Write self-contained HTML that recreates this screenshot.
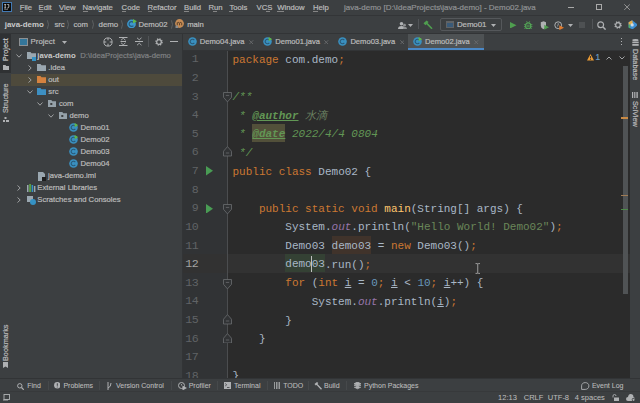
<!DOCTYPE html>
<html><head><meta charset="utf-8">
<style>
*{margin:0;padding:0;box-sizing:border-box}
html,body{width:640px;height:403px;overflow:hidden;background:#3c3f41;font-family:"Liberation Sans",sans-serif;color:#bbbbbb}
.a{position:absolute;white-space:pre;-webkit-text-stroke:0.2px currentColor}
.code,.ln{-webkit-text-stroke:0}
.code{position:absolute;left:232.5px;font-family:"Liberation Mono",monospace;font-size:11px;line-height:18.625px;height:18.625px;color:#a9b7c6;white-space:pre}
.ln{position:absolute;left:168.5px;width:30px;text-align:right;font-family:"Liberation Mono",monospace;font-size:11.6px;letter-spacing:-0.3px;line-height:18.625px;color:#606366}
.k{color:#cc7832}
.s{color:#6a8759}
.n{color:#6897bb}
.d{color:#629755;font-style:italic}
.tag{color:#629755;font-style:italic;font-weight:bold;text-decoration:underline}
.f{color:#9876aa;font-style:italic}
.m{color:#ffc66d}
.u{text-decoration:underline}
</style></head><body>
<div class="a" style="left:0px;top:0px;width:640px;height:15px;background:#3c3f41;"></div>
<div class="a" style="left:0px;top:15px;width:640px;height:1px;background:#333537;"></div>
<div class="a" style="left:2.2px;top:2.2px;width:9.8px;height:9.8px;background:#0a0a0a;border:1px solid #4379b3"></div>
<svg class="a" style="left:4px;top:3.8px" width="6" height="6.5" viewBox="0 0 6 6.5"><path d="M0.2 0.4H2.2M0.2 4H2.2M1.2 0.4V4" stroke="#c4c4c4" stroke-width="0.9" fill="none"/><path d="M3.2 0.4H4.8V2.9Q4.8 4 3.7 4H3.1" stroke="#c4c4c4" stroke-width="0.9" fill="none"/><rect x="0.2" y="5.3" width="3.8" height="0.9" fill="#8a8a8a"/></svg>
<div class="a" style="left:19.70px;top:2.73px;font-size:7.7px;line-height:10px;color:#bbbbbb">File</div>
<div class="a" style="left:38.50px;top:2.73px;font-size:7.7px;line-height:10px;color:#bbbbbb">Edit</div>
<div class="a" style="left:59.00px;top:2.73px;font-size:7.7px;line-height:10px;color:#bbbbbb">View</div>
<div class="a" style="left:82.50px;top:2.73px;font-size:7.7px;line-height:10px;color:#bbbbbb">Navigate</div>
<div class="a" style="left:121.60px;top:2.73px;font-size:7.7px;line-height:10px;color:#bbbbbb">Code</div>
<div class="a" style="left:147.50px;top:2.73px;font-size:7.7px;line-height:10px;color:#bbbbbb">Refactor</div>
<div class="a" style="left:184.00px;top:2.73px;font-size:7.7px;line-height:10px;color:#bbbbbb">Build</div>
<div class="a" style="left:208.50px;top:2.73px;font-size:7.7px;line-height:10px;color:#bbbbbb">Run</div>
<div class="a" style="left:229.40px;top:2.73px;font-size:7.7px;line-height:10px;color:#bbbbbb">Tools</div>
<div class="a" style="left:256.60px;top:2.73px;font-size:7.7px;line-height:10px;color:#bbbbbb">VCS</div>
<div class="a" style="left:277.20px;top:2.73px;font-size:7.7px;line-height:10px;color:#bbbbbb">Window</div>
<div class="a" style="left:312.90px;top:2.73px;font-size:7.7px;line-height:10px;color:#bbbbbb">Help</div>
<div class="a" style="left:19.7px;top:11.3px;width:3.5px;height:0.7px;background:#858585;"></div>
<div class="a" style="left:38.5px;top:11.3px;width:4px;height:0.7px;background:#858585;"></div>
<div class="a" style="left:59px;top:11.3px;width:4.5px;height:0.7px;background:#858585;"></div>
<div class="a" style="left:82.5px;top:11.3px;width:5px;height:0.7px;background:#858585;"></div>
<div class="a" style="left:121.6px;top:11.3px;width:4.5px;height:0.7px;background:#858585;"></div>
<div class="a" style="left:147.5px;top:11.3px;width:4.5px;height:0.7px;background:#858585;"></div>
<div class="a" style="left:184px;top:11.3px;width:4.5px;height:0.7px;background:#858585;"></div>
<div class="a" style="left:213px;top:11.3px;width:4px;height:0.7px;background:#858585;"></div>
<div class="a" style="left:229.4px;top:11.3px;width:4px;height:0.7px;background:#858585;"></div>
<div class="a" style="left:265.5px;top:11.3px;width:4.5px;height:0.7px;background:#858585;"></div>
<div class="a" style="left:277.2px;top:11.3px;width:6.5px;height:0.7px;background:#858585;"></div>
<div class="a" style="left:312.9px;top:11.3px;width:5px;height:0.7px;background:#858585;"></div>
<div class="a" style="left:344.00px;top:2.63px;font-size:7.98px;line-height:10px;color:#8f9193">java-demo [D:\IdeaProjects\java-demo] - Demo02.java</div>
<div class="a" style="left:567.6px;top:7px;width:6.4px;height:0.9px;background:#a9a9a9;"></div>
<div class="a" style="left:596px;top:4px;width:6.2px;height:6.4px;background:transparent;border:0.85px solid #a9a9a9"></div>
<svg class="a" style="left:624.3px;top:4px" width="6.2" height="6.2" viewBox="0 0 6.2 6.2"><path d="M0.3 0.3L5.9 5.9M5.9 0.3L0.3 5.9" stroke="#a9a9a9" stroke-width="0.8"/></svg>
<div class="a" style="left:0px;top:16px;width:640px;height:17px;background:#3c3f41;"></div>
<div class="a" style="left:0px;top:33px;width:640px;height:1px;background:#323436;"></div>
<div class="a" style="left:4.70px;top:20.26px;font-size:7.9px;line-height:10px;color:#c9c9c9;font-weight:bold;-webkit-text-stroke:0">java-demo</div>
<svg class="a" style="left:46.8px;top:20px" width="3" height="9" viewBox="0 0 3 9"><path d="M0.4 0.3Q2.6 4.5 0.4 8.7" stroke="#65686a" stroke-width="0.8" fill="none"/></svg>
<div class="a" style="left:54.40px;top:20.33px;font-size:7.7px;line-height:10px">src</div>
<svg class="a" style="left:66.5px;top:20px" width="3" height="9" viewBox="0 0 3 9"><path d="M0.4 0.3Q2.6 4.5 0.4 8.7" stroke="#65686a" stroke-width="0.8" fill="none"/></svg>
<div class="a" style="left:73.50px;top:20.33px;font-size:7.7px;line-height:10px">com</div>
<svg class="a" style="left:91.5px;top:20px" width="3" height="9" viewBox="0 0 3 9"><path d="M0.4 0.3Q2.6 4.5 0.4 8.7" stroke="#65686a" stroke-width="0.8" fill="none"/></svg>
<div class="a" style="left:98.50px;top:20.26px;font-size:7.9px;line-height:10px">demo</div>
<svg class="a" style="left:120.8px;top:20px" width="3" height="9" viewBox="0 0 3 9"><path d="M0.4 0.3Q2.6 4.5 0.4 8.7" stroke="#65686a" stroke-width="0.8" fill="none"/></svg>
<svg class="a" style="left:126.6px;top:18.6px" width="10" height="9.5" viewBox="0 0 10 9.5"><circle cx="4.5" cy="5" r="4.4" fill="#3d97cc"/><path d="M6.4 3.5A2.4 2.4 0 1 0 6.4 6.5" stroke="#245a7c" stroke-width="1.2" fill="none"/><path d="M6 0L10 2.2L6 4.4Z" fill="#5fb84a"/></svg>
<div class="a" style="left:138.50px;top:20.33px;font-size:7.7px;line-height:10px">Demo02</div>
<svg class="a" style="left:170.5px;top:20px" width="3" height="9" viewBox="0 0 3 9"><path d="M0.4 0.3Q2.6 4.5 0.4 8.7" stroke="#65686a" stroke-width="0.8" fill="none"/></svg>
<svg class="a" style="left:175.1px;top:18.6px" width="9" height="9.5" viewBox="0 0 9 9.5"><circle cx="4.5" cy="4.5" r="4.4" fill="#c48b55"/><path d="M2.3 6.3V3.4M2.3 4.2Q2.9 3.2 3.6 3.4Q4.5 3.6 4.5 4.6V6.3M4.5 4.2Q5.1 3.2 5.9 3.4Q6.7 3.6 6.7 4.6V6.3" stroke="#4a3320" stroke-width="0.8" fill="none"/><circle cx="1.8" cy="8" r="1.4" fill="#8a8d90"/></svg>
<div class="a" style="left:187.20px;top:20.33px;font-size:7.7px;line-height:10px">main</div>
<svg class="a" style="left:397.5px;top:21.5px" width="9" height="7" viewBox="0 0 9 7"><circle cx="3.5" cy="1.8" r="1.8" fill="#afb1b3"/><path d="M0 7Q0 4 3.5 4Q7 4 7 7Z" fill="#afb1b3"/><circle cx="6.5" cy="3.2" r="1.4" fill="#8e9092"/><path d="M5 7Q5 4.8 6.8 4.8Q9 4.8 9 7Z" fill="#8e9092"/></svg>
<svg class="a" style="left:408.4px;top:24px" width="5" height="3" viewBox="0 0 5 3"><path d="M0 0H5L2.5 3Z" fill="#afb1b3"/></svg>
<div class="a" style="left:417.5px;top:19px;width:1px;height:10px;background:#515457;"></div>
<svg class="a" style="left:422.5px;top:19.5px" width="10" height="9.5" viewBox="0 0 10 9.5"><path d="M0.5 3.2L3.6 0.6L5.6 2.1L4.6 3.1L9.6 8.2L8.5 9.3L3.5 4.2L2.4 5.2Z" fill="#4f9e4f"/></svg>
<div class="a" style="left:439.5px;top:18.2px;width:62px;height:12.4px;background:transparent;border:1px solid #55585b;border-radius:2px"></div>
<div class="a" style="left:445.6px;top:20.8px;width:8.6px;height:7.6px;background:#3a5a78;border:1.2px solid #606366;border-top-width:2px"></div>
<div class="a" style="left:457.00px;top:20.36px;font-size:7.9px;line-height:10px;letter-spacing:-0.1px">Demo01</div>
<svg class="a" style="left:491px;top:24px" width="5" height="3" viewBox="0 0 5 3"><path d="M0 0H5L2.5 3Z" fill="#afb1b3"/></svg>
<svg class="a" style="left:510px;top:21.5px" width="6.5" height="6.5" viewBox="0 0 6.5 6.5"><path d="M0 0L6.5 3.25L0 6.5Z" fill="#4f9e4f"/></svg>
<svg class="a" style="left:524.2px;top:20.6px" width="8.4" height="8.2" viewBox="0 0 8.4 8.2"><path d="M2.6 0.2L3.3 1.4M5.8 0.2L5.1 1.4" stroke="#54a857" stroke-width="0.8"/><ellipse cx="4.2" cy="4.9" rx="2.6" ry="3" fill="#3c3f41" stroke="#54a857" stroke-width="1.1"/><path d="M0 3.6H1.6M6.8 3.6H8.4M0 5.6H1.6M6.8 5.6H8.4M0.4 7.6L1.8 6.8M8 7.6L6.6 6.8M2.6 4.2H5.8M2.6 5.8H5.8" stroke="#54a857" stroke-width="0.8"/></svg>
<svg class="a" style="left:539.5px;top:20.5px" width="9" height="9" viewBox="0 0 9 9"><path d="M0.8 1.3L3.6 0.3L6 1.3V4.8Q6 7 3.4 8.3Q0.8 7 0.8 4.8Z" fill="#afb1b3"/><path d="M4.3 3.8L9 6.3L4.3 8.8Z" fill="#4f9e4f"/></svg>
<svg class="a" style="left:553.6px;top:20.5px" width="10" height="9" viewBox="0 0 10 9"><circle cx="4.2" cy="4.2" r="3.4" fill="none" stroke="#afb1b3" stroke-width="1"/><path d="M4.2 2.2V4.3L3 5.3" stroke="#afb1b3" stroke-width="0.8" fill="none"/><path d="M5.3 4.3L10 6.7L5.3 9.1Z" fill="#e07b2e"/></svg>
<svg class="a" style="left:567.8px;top:24px" width="5" height="3" viewBox="0 0 5 3"><path d="M0 0H5L2.5 3Z" fill="#afb1b3"/></svg>
<div class="a" style="left:578.8px;top:21.5px;width:6px;height:6px;background:#4e5153;"></div>
<div class="a" style="left:591.5px;top:19px;width:1px;height:10px;background:#515457;"></div>
<svg class="a" style="left:597.4px;top:20.5px" width="9" height="9" viewBox="0 0 9 9"><circle cx="3.7" cy="3.7" r="2.9" fill="none" stroke="#afb1b3" stroke-width="1.2"/><path d="M5.8 5.8L8.6 8.6" stroke="#afb1b3" stroke-width="1.5"/></svg>
<svg class="a" style="left:613.8px;top:20.5px" width="8" height="8" viewBox="0 0 8 8"><circle cx="4" cy="4" r="2.9" fill="none" stroke="#afb1b3" stroke-width="1.7" stroke-dasharray="1.2 1.08"/><circle cx="4" cy="4" r="2.3" fill="none" stroke="#afb1b3" stroke-width="1.2"/></svg>
<svg class="a" style="left:627.8px;top:19.8px" width="9.4" height="9.6" viewBox="0 0 9.4 9.6"><path d="M0.6 2.2L4.2 0.2L9.2 4.2V5.6L4.6 9.4L0.6 7.6Z" fill="#3d8fd4"/><path d="M0.6 2.2L4.2 0.2L5 4.3L0.6 4.8Z" fill="#e2ac4c"/><path d="M0.6 4.8L2.4 4.6L2.2 8.4L0.6 7.6Z" fill="#4fae6a"/><circle cx="4.2" cy="4.9" r="1.6" fill="#dfe6ee" opacity="0.85"/></svg>
<div class="a" style="left:0px;top:34px;width:11px;height:344px;background:#3c3f41;"></div>
<div class="a" style="left:0px;top:34px;width:10.5px;height:39px;background:#2f3133;"></div>
<div class="a" style="left:1.5px;top:60.5px;transform:rotate(-90deg);transform-origin:0 0;font-size:7.3px;line-height:8px;color:#c8c8c8">Project</div>
<svg class="a" style="left:2.5px;top:65px" width="6" height="5" viewBox="0 0 6 5"><path d="M0 0H2.5L3.2 1H6V5H0Z" fill="#afb1b3"/></svg>
<div class="a" style="left:1.5px;top:112.5px;transform:rotate(-90deg);transform-origin:0 0;font-size:7.3px;line-height:8px;color:#bbbbbb">Structure</div>
<svg class="a" style="left:2.5px;top:117px" width="6" height="5" viewBox="0 0 6 5"><rect x="1.5" y="0" width="2" height="2" fill="#afb1b3"/><rect x="0" y="3" width="2" height="2" fill="#afb1b3"/><rect x="3" y="3" width="3" height="2" fill="#afb1b3"/></svg>
<div class="a" style="left:1.5px;top:360.5px;transform:rotate(-90deg);transform-origin:0 0;font-size:7.3px;line-height:8px;color:#bbbbbb">Bookmarks</div>
<svg class="a" style="left:3px;top:362px" width="5" height="6" viewBox="0 0 5 6"><path d="M0 0H5V6L2.5 4.5L0 6Z" fill="#afb1b3"/></svg>
<div class="a" style="left:11px;top:34px;width:171px;height:344px;background:#3c3f41;"></div>
<div class="a" style="left:18.8px;top:37.8px;width:9px;height:8.2px;background:#34769a;border:1px solid #8d9093;border-top-width:1.5px"></div>
<div class="a" style="left:30.60px;top:37.10px;font-size:7.8px;line-height:10px">Project</div>
<svg class="a" style="left:62px;top:41.2px" width="5" height="3" viewBox="0 0 5 3"><path d="M0 0H5L2.5 3Z" fill="#afb1b3"/></svg>
<svg class="a" style="left:102.5px;top:37px" width="10" height="10" viewBox="0 0 10 10"><circle cx="5" cy="5" r="4.1" fill="none" stroke="#afb1b3" stroke-width="1"/><path d="M5 1V3.3M5 6.7V9M1 5H3.3M6.7 5H9" stroke="#afb1b3" stroke-width="1"/></svg>
<svg class="a" style="left:119px;top:37px" width="8.5" height="9" viewBox="0 0 8.5 9"><path d="M0 0.5H8.5M0 8.5H8.5M1.5 4.5H7" stroke="#afb1b3" stroke-width="1"/><path d="M2 3.2L4.25 1.3L6.5 3.2M2 5.8L4.25 7.7L6.5 5.8" stroke="#afb1b3" stroke-width="0.9" fill="none"/></svg>
<svg class="a" style="left:134.5px;top:37px" width="8.5" height="9" viewBox="0 0 8.5 9"><path d="M0 4.5H8.5" stroke="#afb1b3" stroke-width="1"/><path d="M2 0.8L4.25 2.8L6.5 0.8M2 8.2L4.25 6.2L6.5 8.2" stroke="#afb1b3" stroke-width="0.9" fill="none"/></svg>
<div class="a" style="left:148px;top:36px;width:1px;height:11px;background:#515457;"></div>
<svg class="a" style="left:154.5px;top:37.5px" width="8" height="8" viewBox="0 0 8 8"><circle cx="4" cy="4" r="2.9" fill="none" stroke="#afb1b3" stroke-width="1.7" stroke-dasharray="1.2 1.08"/><circle cx="4" cy="4" r="2.3" fill="none" stroke="#afb1b3" stroke-width="1.2"/></svg>
<div class="a" style="left:170px;top:41px;width:8px;height:1px;background:#afb1b3;"></div>
<div class="a" style="left:11px;top:74px;width:171px;height:12px;background:#4e4a3c;"></div>
<svg class="a" style="left:15.8px;top:54px" width="6" height="4" viewBox="0 0 6 4"><path d="M0.5 0.5L3 3.2L5.5 0.5" stroke="#a3a5a7" stroke-width="0.95" fill="none"/></svg>
<svg class="a" style="left:26.5px;top:52.1px" width="9" height="7" viewBox="0 0 9 7"><path d="M0 0H3.5L4.5 1.3H9V7H0Z" fill="#9aa7b0"/></svg>
<div class="a" style="left:31.5px;top:57px;width:4px;height:4px;background:#3592c4;"></div>
<div class="a" style="left:37.30px;top:50.71px;font-size:7.75px;line-height:10px;color:#c9c9c9;font-weight:bold;-webkit-text-stroke:0">java-demo</div>
<div class="a" style="left:80.30px;top:50.73px;font-size:7.7px;line-height:10px;color:#808284">D:\IdeaProjects\java-demo</div>
<svg class="a" style="left:27.5px;top:65px" width="4" height="6" viewBox="0 0 4 6"><path d="M0.5 0.5L3.2 3L0.5 5.5" stroke="#a3a5a7" stroke-width="0.95" fill="none"/></svg>
<svg class="a" style="left:37px;top:64.1px" width="9" height="7" viewBox="0 0 9 7"><path d="M0 0H3.5L4.5 1.3H9V7H0Z" fill="#9aa7b0"/></svg>
<div class="a" style="left:48.30px;top:62.73px;font-size:7.7px;line-height:10px">.idea</div>
<svg class="a" style="left:27.5px;top:77px" width="4" height="6" viewBox="0 0 4 6"><path d="M0.5 0.5L3.2 3L0.5 5.5" stroke="#a3a5a7" stroke-width="0.95" fill="none"/></svg>
<svg class="a" style="left:37px;top:76.1px" width="9" height="7" viewBox="0 0 9 7"><path d="M0 0H3.5L4.5 1.3H9V7H0Z" fill="#d5823f"/></svg>
<div class="a" style="left:48.30px;top:74.73px;font-size:7.7px;line-height:10px">out</div>
<svg class="a" style="left:26.5px;top:90px" width="6" height="4" viewBox="0 0 6 4"><path d="M0.5 0.5L3 3.2L5.5 0.5" stroke="#a3a5a7" stroke-width="0.95" fill="none"/></svg>
<svg class="a" style="left:37px;top:88.1px" width="9" height="7" viewBox="0 0 9 7"><path d="M0 0H3.5L4.5 1.3H9V7H0Z" fill="#3d8fc2"/></svg>
<div class="a" style="left:48.30px;top:86.73px;font-size:7.7px;line-height:10px">src</div>
<svg class="a" style="left:36.5px;top:101.8px" width="6" height="4" viewBox="0 0 6 4"><path d="M0.5 0.5L3 3.2L5.5 0.5" stroke="#a3a5a7" stroke-width="0.95" fill="none"/></svg>
<svg class="a" style="left:47.8px;top:100.1px" width="8.5" height="7" viewBox="0 0 8.5 7"><path d="M0 0H3.3L4.2 1.2H8.5V7H0Z" fill="#95a1a9"/><rect x="2.3" y="3" width="2" height="2" fill="#3c3f41"/></svg>
<div class="a" style="left:59.00px;top:98.73px;font-size:7.7px;line-height:10px">com</div>
<svg class="a" style="left:47.6px;top:113.8px" width="6" height="4" viewBox="0 0 6 4"><path d="M0.5 0.5L3 3.2L5.5 0.5" stroke="#a3a5a7" stroke-width="0.95" fill="none"/></svg>
<svg class="a" style="left:58.8px;top:112.1px" width="8.5" height="7" viewBox="0 0 8.5 7"><path d="M0 0H3.3L4.2 1.2H8.5V7H0Z" fill="#95a1a9"/><rect x="2.3" y="3" width="2" height="2" fill="#3c3f41"/></svg>
<div class="a" style="left:69.50px;top:110.73px;font-size:7.7px;line-height:10px">demo</div>
<svg class="a" style="left:69.2px;top:123.2px" width="9" height="9" viewBox="0 0 9 9"><circle cx="4.5" cy="4.5" r="4.3" fill="#3a90c0"/><path d="M6.3 3.1A2.3 2.3 0 1 0 6.3 5.9" stroke="#2a5a78" stroke-width="1.1" fill="none"/><path d="M5.6 0L9.2 2.1L5.6 4.2Z" fill="#5fb84a"/></svg>
<div class="a" style="left:80.50px;top:122.73px;font-size:7.7px;line-height:10px">Demo01</div>
<svg class="a" style="left:69.2px;top:135.2px" width="9" height="9" viewBox="0 0 9 9"><circle cx="4.5" cy="4.5" r="4.3" fill="#3a90c0"/><path d="M6.3 3.1A2.3 2.3 0 1 0 6.3 5.9" stroke="#2a5a78" stroke-width="1.1" fill="none"/><path d="M5.6 0L9.2 2.1L5.6 4.2Z" fill="#5fb84a"/></svg>
<div class="a" style="left:80.50px;top:134.73px;font-size:7.7px;line-height:10px">Demo02</div>
<svg class="a" style="left:69.2px;top:147.2px" width="9" height="9" viewBox="0 0 9 9"><circle cx="4.5" cy="4.5" r="4.3" fill="#3a90c0"/><path d="M6.3 3.1A2.3 2.3 0 1 0 6.3 5.9" stroke="#2a5a78" stroke-width="1.1" fill="none"/></svg>
<div class="a" style="left:80.50px;top:146.73px;font-size:7.7px;line-height:10px">Demo03</div>
<svg class="a" style="left:69.2px;top:159.2px" width="9" height="9" viewBox="0 0 9 9"><circle cx="4.5" cy="4.5" r="4.3" fill="#3a90c0"/><path d="M6.3 3.1A2.3 2.3 0 1 0 6.3 5.9" stroke="#2a5a78" stroke-width="1.1" fill="none"/></svg>
<div class="a" style="left:80.50px;top:158.73px;font-size:7.7px;line-height:10px">Demo04</div>
<svg class="a" style="left:37.5px;top:171.5px" width="9" height="9" viewBox="0 0 9 9"><path d="M0 0H5L7 2V9H0Z" fill="#9aa7b0"/><rect x="4" y="5" width="4" height="4" fill="#1e1e1e"/></svg>
<div class="a" style="left:48.00px;top:170.73px;font-size:7.7px;line-height:10px">java-demo.iml</div>
<svg class="a" style="left:16.5px;top:185px" width="4" height="6" viewBox="0 0 4 6"><path d="M0.5 0.5L3.2 3L0.5 5.5" stroke="#a3a5a7" stroke-width="0.95" fill="none"/></svg>
<svg class="a" style="left:26.5px;top:184px" width="9" height="8" viewBox="0 0 9 8"><rect x="0" y="1" width="1.5" height="7" fill="#9aa7b0"/><rect x="2.3" y="0" width="1.5" height="8" fill="#62b543"/><rect x="4.6" y="1" width="1.5" height="7" fill="#3592c4"/><rect x="6.9" y="2" width="1.5" height="6" fill="#9aa7b0"/></svg>
<div class="a" style="left:37.30px;top:182.73px;font-size:7.7px;line-height:10px">External Libraries</div>
<svg class="a" style="left:16.5px;top:197px" width="4" height="6" viewBox="0 0 4 6"><path d="M0.5 0.5L3.2 3L0.5 5.5" stroke="#a3a5a7" stroke-width="0.95" fill="none"/></svg>
<svg class="a" style="left:26.5px;top:195.5px" width="9" height="9" viewBox="0 0 9 9"><rect x="0" y="0" width="6" height="6" fill="#9aa7b0"/><circle cx="6" cy="6" r="3" fill="#3592c4"/></svg>
<div class="a" style="left:37.30px;top:194.73px;font-size:7.7px;line-height:10px">Scratches and Consoles</div>
<div class="a" style="left:182px;top:34px;width:448px;height:344px;background:#323436;"></div>
<div class="a" style="left:183px;top:34px;width:447px;height:15.5px;background:#3c3f41;"></div>
<div class="a" style="left:408px;top:34px;width:76px;height:15.5px;background:#4e5254;"></div>
<div class="a" style="left:408px;top:47.5px;width:76px;height:2px;background:#4a88c7;"></div>
<svg class="a" style="left:187.7px;top:37.1px" width="9" height="9" viewBox="0 0 9 9"><circle cx="4.5" cy="4.5" r="4.3" fill="#3a90c0"/><path d="M6.3 3.1A2.3 2.3 0 1 0 6.3 5.9" stroke="#2a5a78" stroke-width="1.1" fill="none"/></svg>
<div class="a" style="left:199.70px;top:37.37px;font-size:7.6px;line-height:10px">Demo04.java</div>
<svg class="a" style="left:249px;top:39.5px" width="4.5" height="4.5" viewBox="0 0 4.5 4.5"><path d="M0.3 0.3L4.2 4.2M4.2 0.3L0.3 4.2" stroke="#6e7072" stroke-width="0.8"/></svg>
<svg class="a" style="left:263.2px;top:37.1px" width="9" height="9" viewBox="0 0 9 9"><circle cx="4.5" cy="4.5" r="4.3" fill="#3a90c0"/><path d="M6.3 3.1A2.3 2.3 0 1 0 6.3 5.9" stroke="#2a5a78" stroke-width="1.1" fill="none"/><path d="M5.6 0L9.2 2.1L5.6 4.2Z" fill="#5fb84a"/></svg>
<div class="a" style="left:275.20px;top:37.37px;font-size:7.6px;line-height:10px">Demo01.java</div>
<svg class="a" style="left:324.2px;top:39.5px" width="4.5" height="4.5" viewBox="0 0 4.5 4.5"><path d="M0.3 0.3L4.2 4.2M4.2 0.3L0.3 4.2" stroke="#6e7072" stroke-width="0.8"/></svg>
<svg class="a" style="left:338.4px;top:37.1px" width="9" height="9" viewBox="0 0 9 9"><circle cx="4.5" cy="4.5" r="4.3" fill="#3a90c0"/><path d="M6.3 3.1A2.3 2.3 0 1 0 6.3 5.9" stroke="#2a5a78" stroke-width="1.1" fill="none"/></svg>
<div class="a" style="left:350.40px;top:37.37px;font-size:7.6px;line-height:10px">Demo03.java</div>
<svg class="a" style="left:399.7px;top:39.5px" width="4.5" height="4.5" viewBox="0 0 4.5 4.5"><path d="M0.3 0.3L4.2 4.2M4.2 0.3L0.3 4.2" stroke="#6e7072" stroke-width="0.8"/></svg>
<svg class="a" style="left:413px;top:37.1px" width="9" height="9" viewBox="0 0 9 9"><circle cx="4.5" cy="4.5" r="4.3" fill="#3a90c0"/><path d="M6.3 3.1A2.3 2.3 0 1 0 6.3 5.9" stroke="#2a5a78" stroke-width="1.1" fill="none"/><path d="M5.6 0L9.2 2.1L5.6 4.2Z" fill="#5fb84a"/></svg>
<div class="a" style="left:425.00px;top:37.37px;font-size:7.6px;line-height:10px">Demo02.java</div>
<svg class="a" style="left:474.4px;top:39.5px" width="4.5" height="4.5" viewBox="0 0 4.5 4.5"><path d="M0.3 0.3L4.2 4.2M4.2 0.3L0.3 4.2" stroke="#6e7072" stroke-width="0.8"/></svg>
<div class="a" style="left:620.5px;top:37.5px;width:1.5px;height:1.5px;background:#afb1b3;box-shadow:0 3px 0 #afb1b3,0 6px 0 #afb1b3"></div>
<div class="a" style="left:630px;top:34px;width:10px;height:344px;background:#3c3f41;"></div>
<svg class="a" style="left:631.5px;top:39px" width="7" height="7" viewBox="0 0 7 7"><ellipse cx="3.5" cy="1.2" rx="3.2" ry="1.1" fill="#afb1b3"/><rect x="0.3" y="2.6" width="6.4" height="1.6" fill="#afb1b3"/><rect x="0.3" y="5" width="6.4" height="1.8" fill="#afb1b3"/></svg>
<div class="a" style="left:631px;top:49px;transform:rotate(90deg) translateY(-8px);transform-origin:0 0;font-size:7.3px;line-height:8px;color:#bbbbbb">Database</div>
<svg class="a" style="left:632px;top:92px" width="6" height="6" viewBox="0 0 6 6"><path d="M0.5 0V6M2.3 0V6M4.1 0V6M5.7 0V6" stroke="#afb1b3" stroke-width="1"/></svg>
<div class="a" style="left:631px;top:101px;transform:rotate(90deg) translateY(-8px);transform-origin:0 0;font-size:7.3px;line-height:8px;color:#bbbbbb">SciView</div>
<div class="a" style="left:183px;top:50.5px;width:45px;height:327.5px;background:#313335;"></div>
<div class="a" style="left:228px;top:50.5px;width:402px;height:327.5px;background:#2b2b2b;"></div>
<div class="a" style="left:183px;top:254.3px;width:447px;height:18.5px;background:#323232;"></div>
<div class="a" style="left:227.2px;top:50.5px;width:0.8px;height:327.5px;background:#4b4d4f;"></div>
<div class="ln" style="top:50.35px;color:#606366">1</div>
<div class="ln" style="top:68.97px;color:#606366">2</div>
<div class="ln" style="top:87.60px;color:#606366">3</div>
<div class="ln" style="top:106.22px;color:#606366">4</div>
<div class="ln" style="top:124.85px;color:#606366">5</div>
<div class="ln" style="top:143.48px;color:#606366">6</div>
<div class="ln" style="top:162.10px;color:#606366">7</div>
<div class="ln" style="top:180.73px;color:#606366">8</div>
<div class="ln" style="top:199.35px;color:#606366">9</div>
<div class="ln" style="top:217.98px;color:#606366">10</div>
<div class="ln" style="top:236.60px;color:#606366">11</div>
<div class="ln" style="top:255.23px;color:#a4a3a3">12</div>
<div class="ln" style="top:273.85px;color:#606366">13</div>
<div class="ln" style="top:292.48px;color:#606366">14</div>
<div class="ln" style="top:311.10px;color:#606366">15</div>
<div class="ln" style="top:329.73px;color:#606366">16</div>
<div class="ln" style="top:348.35px;color:#606366">17</div>
<div class="ln" style="top:366.98px;color:#606366">18</div>
<div class="code" style="top:50.80px"><span class="k">package</span> com.demo<span class="k">;</span></div>
<div class="code" style="top:88.05px"><span class="d">/**</span></div>
<div class="code" style="top:106.67px"><span class="d"> * </span><span class="tag">@author</span><span class="d"> </span><span style="color:#6b8262;font-style:italic">水滴</span></div>
<div class="code" style="top:125.30px"><span class="d"> * </span><span class="tag" style="background:#52503a;padding:4.2px 0 1.7px 0">@date</span><span class="d"> 2022/4/4 0804</span></div>
<div class="code" style="top:143.93px"><span class="d"> */</span></div>
<div class="code" style="top:162.55px"><span class="k">public class </span>Demo02 {</div>
<div class="code" style="top:199.80px">    <span class="k">public static void </span><span class="m">main</span>(String[] args) {</div>
<div class="code" style="top:218.43px">        System.<span class="f">out</span>.println(<span class="s">"Hello World! Demo02"</span>)<span class="k">;</span></div>
<div class="code" style="top:237.05px">        Demo03 <span style="background:#40332b;padding:4.2px 0 1.7px 0">demo03</span> = <span class="k">new </span>Demo03()<span class="k">;</span></div>
<div class="code" style="top:255.68px">        <span style="background:#344134;padding:4.2px 0 1.7px 0">demo03</span>.run()<span class="k">;</span></div>
<div class="code" style="top:274.30px">        <span class="k">for </span>(<span class="k">int </span><span class="u">i</span> = <span class="n">0</span><span class="k">; </span><span class="u">i</span> &lt; <span class="n">10</span><span class="k">; </span><span class="u">i</span>++) {</div>
<div class="code" style="top:292.93px">            System.<span class="f">out</span>.println(<span class="u">i</span>)<span class="k">;</span></div>
<div class="code" style="top:311.55px">        }</div>
<div class="code" style="top:330.18px">    }</div>
<div class="code" style="top:367.43px">}</div>
<div class="a" style="left:310.50px;top:256.28px;width:1px;height:15.4px;background:#c0c0c0;"></div>
<svg class="a" style="left:205.8px;top:166.45px" width="7" height="9.6" viewBox="0 0 7 9.6"><path d="M0 0L7 4.8L0 9.6Z" fill="#499c54"/></svg>
<svg class="a" style="left:205.8px;top:203.70px" width="7" height="9.6" viewBox="0 0 7 9.6"><path d="M0 0L7 4.8L0 9.6Z" fill="#499c54"/></svg>
<svg class="a" style="left:222.6px;top:92.35px" width="9" height="10.5" viewBox="0 0 9 10.5"><path d="M0.5 0.5H8.5V5.3L4.5 9.9L0.5 5.3Z" fill="#313335" stroke="#6b6d70" stroke-width="0.8"/><path d="M2.8 3.4H6.2" stroke="#6b6d70" stroke-width="0.8"/></svg>
<svg class="a" style="left:222.6px;top:204.10px" width="9" height="10.5" viewBox="0 0 9 10.5"><path d="M0.5 0.5H8.5V5.3L4.5 9.9L0.5 5.3Z" fill="#313335" stroke="#6b6d70" stroke-width="0.8"/><path d="M2.8 3.4H6.2" stroke="#6b6d70" stroke-width="0.8"/></svg>
<svg class="a" style="left:222.6px;top:278.60px" width="9" height="10.5" viewBox="0 0 9 10.5"><path d="M0.5 0.5H8.5V5.3L4.5 9.9L0.5 5.3Z" fill="#313335" stroke="#6b6d70" stroke-width="0.8"/><path d="M2.8 3.4H6.2" stroke="#6b6d70" stroke-width="0.8"/></svg>
<svg class="a" style="left:222.6px;top:146.43px" width="9" height="10.5" viewBox="0 0 9 10.5"><path d="M0.5 10H8.5V5.2L4.5 0.6L0.5 5.2Z" fill="#313335" stroke="#6b6d70" stroke-width="0.8"/><path d="M2.8 7H6.2" stroke="#6b6d70" stroke-width="0.8"/></svg>
<svg class="a" style="left:222.6px;top:314.05px" width="9" height="10.5" viewBox="0 0 9 10.5"><path d="M0.5 10H8.5V5.2L4.5 0.6L0.5 5.2Z" fill="#313335" stroke="#6b6d70" stroke-width="0.8"/><path d="M2.8 7H6.2" stroke="#6b6d70" stroke-width="0.8"/></svg>
<svg class="a" style="left:222.6px;top:332.68px" width="9" height="10.5" viewBox="0 0 9 10.5"><path d="M0.5 10H8.5V5.2L4.5 0.6L0.5 5.2Z" fill="#313335" stroke="#6b6d70" stroke-width="0.8"/><path d="M2.8 7H6.2" stroke="#6b6d70" stroke-width="0.8"/></svg>
<svg class="a" style="left:474.5px;top:262.5px" width="5.5" height="11" viewBox="0 0 5.5 11"><path d="M0.5 0.6H2.2Q2.75 0.9 3.3 0.6H5M0.5 10.4H2.2Q2.75 10.1 3.3 10.4H5M2.75 1V10" stroke="#a9a9a9" stroke-width="0.9" fill="none"/></svg>
<svg class="a" style="left:586.6px;top:54.3px" width="7.2" height="6.6" viewBox="0 0 7.2 6.6"><path d="M3.5 0L7 6.5H0Z" fill="#e89a35"/><path d="M3.5 2V4.3M3.5 5V5.8" stroke="#2b2b2b" stroke-width="0.9"/></svg>
<div class="a" style="left:595.60px;top:53.16px;font-size:8.2px;line-height:10px;color:#6a9cc4">1</div>
<svg class="a" style="left:606px;top:55.5px" width="6" height="4" viewBox="0 0 6 4"><path d="M0.5 3.5L3 1L5.5 3.5" stroke="#afb1b3" stroke-width="0.9" fill="none"/></svg>
<svg class="a" style="left:618.5px;top:55.5px" width="6" height="4" viewBox="0 0 6 4"><path d="M0.5 0.5L3 3L5.5 0.5" stroke="#afb1b3" stroke-width="0.9" fill="none"/></svg>
<div class="a" style="left:623px;top:66px;width:5px;height:228px;background:#505355;"></div>
<div class="a" style="left:620.5px;top:117.3px;width:7.5px;height:1.3px;background:#c88a45;"></div>
<div class="a" style="left:621px;top:195.3px;width:7px;height:1.2px;background:#a07b55;"></div>
<div class="a" style="left:621px;top:208.7px;width:7px;height:1.2px;background:#4e8a4a;"></div>
<div class="a" style="left:0px;top:377.5px;width:640px;height:1px;background:#323436;"></div>
<div class="a" style="left:0px;top:378.5px;width:640px;height:12.5px;background:#3c3f41;"></div>
<div class="a" style="left:0px;top:391px;width:640px;height:1px;background:#37393b;"></div>
<div class="a" style="left:0px;top:392px;width:640px;height:11px;background:#3c3f41;"></div>
<svg class="a" style="left:17px;top:382.5px" width="7" height="7" viewBox="0 0 7 7"><circle cx="2.8" cy="2.8" r="2.2" fill="none" stroke="#afb1b3" stroke-width="1"/><path d="M4.5 4.5L6.8 6.8" stroke="#afb1b3" stroke-width="1.2"/></svg>
<div class="a" style="left:27.20px;top:380.97px;font-size:7px;line-height:10px;-webkit-text-stroke:0.08px">Find</div>
<div class="a" style="left:47.5px;top:381px;width:0.8px;height:9px;background:#46494b;"></div>
<div class="a" style="left:99.4px;top:381px;width:0.8px;height:9px;background:#46494b;"></div>
<div class="a" style="left:170.5px;top:381px;width:0.8px;height:9px;background:#46494b;"></div>
<div class="a" style="left:216.5px;top:381px;width:0.8px;height:9px;background:#46494b;"></div>
<div class="a" style="left:266.5px;top:381px;width:0.8px;height:9px;background:#46494b;"></div>
<div class="a" style="left:307.5px;top:381px;width:0.8px;height:9px;background:#46494b;"></div>
<div class="a" style="left:345.5px;top:381px;width:0.8px;height:9px;background:#46494b;"></div>
<svg class="a" style="left:53.7px;top:382px" width="6.6" height="6.6" viewBox="0 0 6.6 6.6"><circle cx="3.3" cy="3.3" r="3.2" fill="#afb1b3"/><path d="M3.3 1.3V3.8M3.3 4.6V5.4" stroke="#3c3f41" stroke-width="1"/></svg>
<div class="a" style="left:63.40px;top:380.97px;font-size:7px;line-height:10px;-webkit-text-stroke:0.08px">Problems</div>
<svg class="a" style="left:107px;top:382px" width="5" height="8" viewBox="0 0 5 8"><path d="M1 0V8M1 6Q4 5 4 1" stroke="#afb1b3" stroke-width="1" fill="none"/></svg>
<div class="a" style="left:116.00px;top:380.97px;font-size:7px;line-height:10px;-webkit-text-stroke:0.08px">Version Control</div>
<svg class="a" style="left:178px;top:382px" width="9" height="8" viewBox="0 0 9 8"><circle cx="3.5" cy="3.5" r="3" fill="none" stroke="#afb1b3" stroke-width="1"/><path d="M3.5 2V3.5" stroke="#afb1b3" stroke-width="0.8"/><path d="M4.5 3.5L9 6L4.5 8.5Z" fill="#afb1b3"/></svg>
<div class="a" style="left:188.70px;top:380.97px;font-size:7px;line-height:10px;-webkit-text-stroke:0.08px">Profiler</div>
<svg class="a" style="left:224px;top:382px" width="7" height="7" viewBox="0 0 7 7"><rect width="7" height="7" fill="#afb1b3"/><path d="M1.2 1.5L2.7 2.8L1.2 4M3 5.5H5.5" stroke="#3c3f41" stroke-width="0.8" fill="none"/></svg>
<div class="a" style="left:234.00px;top:380.97px;font-size:7px;line-height:10px;-webkit-text-stroke:0.08px">Terminal</div>
<svg class="a" style="left:274px;top:382px" width="6" height="7" viewBox="0 0 6 7"><path d="M0.5 0V7M2.5 0V7M4 0V7M5.5 0V7" stroke="#afb1b3" stroke-width="0.8"/></svg>
<div class="a" style="left:283.20px;top:380.97px;font-size:7px;line-height:10px;-webkit-text-stroke:0.08px">TODO</div>
<svg class="a" style="left:314px;top:382px" width="8" height="8" viewBox="0 0 8 8"><path d="M0.5 2L3 0L4.3 1L3.5 2L8 6.8L7 7.8L2.6 3L1.8 3.6Z" fill="#afb1b3"/></svg>
<div class="a" style="left:324.00px;top:380.97px;font-size:7px;line-height:10px;-webkit-text-stroke:0.08px">Build</div>
<svg class="a" style="left:353.5px;top:382px" width="7" height="8" viewBox="0 0 7 8"><path d="M3.5 0L7 1.8L3.5 3.6L0 1.8Z M0 3.2L3.5 5L7 3.2 M0 5L3.5 6.8L7 5" stroke="#afb1b3" stroke-width="0.8" fill="#afb1b3"/></svg>
<div class="a" style="left:364.00px;top:380.97px;font-size:7px;line-height:10px;-webkit-text-stroke:0.08px">Python Packages</div>
<svg class="a" style="left:581px;top:381.5px" width="8.5" height="8" viewBox="0 0 8.5 8"><path d="M4.2 0.6C6.5 0.6 7.9 2 7.9 3.9C7.9 6 6.3 7.4 4.2 7.4H0.6V3.9C0.6 2 2 0.6 4.2 0.6Z" fill="none" stroke="#afb1b3" stroke-width="0.9"/></svg>
<div class="a" style="left:591.90px;top:380.97px;font-size:7px;line-height:10px;-webkit-text-stroke:0.08px">Event Log</div>
<svg class="a" style="left:2.5px;top:394px" width="7" height="6.5" viewBox="0 0 7 6.5"><rect x="1" y="0.5" width="5.5" height="5" fill="none" stroke="#afb1b3" stroke-width="0.9"/><path d="M0 6H5" stroke="#afb1b3" stroke-width="0.9"/></svg>
<div class="a" style="left:498.10px;top:392.60px;font-size:7.5px;line-height:10px;-webkit-text-stroke:0.05px">12:13</div>
<div class="a" style="left:523.75px;top:392.60px;font-size:7.5px;line-height:10px;-webkit-text-stroke:0.05px">CRLF</div>
<div class="a" style="left:547.80px;top:392.60px;font-size:7.5px;line-height:10px;-webkit-text-stroke:0.05px">UTF-8</div>
<div class="a" style="left:574.80px;top:392.60px;font-size:7.5px;line-height:10px;-webkit-text-stroke:0.05px">4 spaces</div>
<svg class="a" style="left:612px;top:393.5px" width="7" height="7.5" viewBox="0 0 7 7.5"><path d="M1 3.5V2Q1 0.5 2.5 0.5Q4 0.5 4 2" stroke="#afb1b3" stroke-width="0.9" fill="none"/><rect x="2" y="3.5" width="5" height="4" fill="#afb1b3"/></svg>
<svg class="a" style="left:626px;top:393px" width="10" height="9" viewBox="0 0 10 9"><path d="M2 4Q0 4 0 6Q0 8 2 8H7Q9 8 9 6Q9 4.5 7.5 4.3Q7.5 1 4.5 1Q2.5 1 2 4Z" fill="#afb1b3"/><circle cx="7.5" cy="6.8" r="1.8" fill="#3c3f41"/><circle cx="7.5" cy="6.8" r="1.1" fill="#afb1b3"/></svg>
</body></html>
